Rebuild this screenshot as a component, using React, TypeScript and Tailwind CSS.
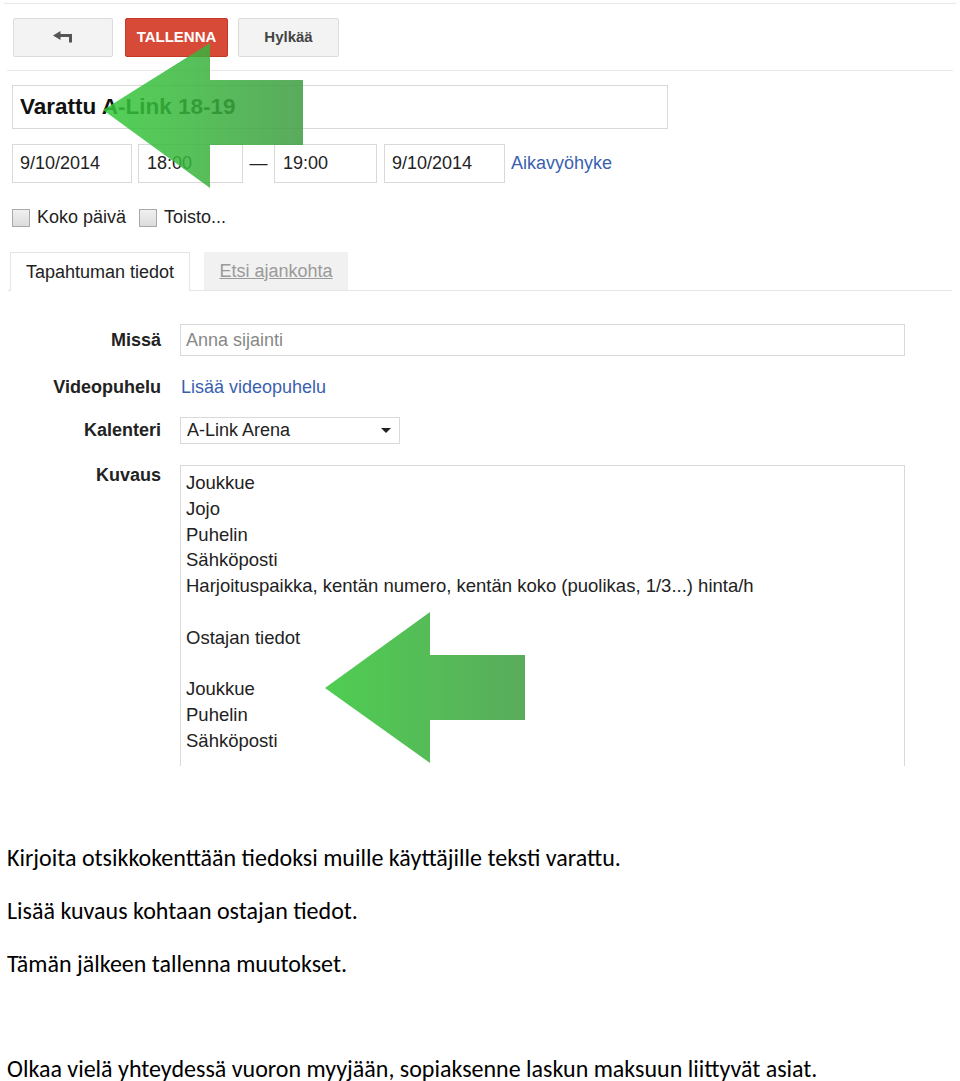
const ui = { fontFamily: '"Liberation Sans", Arial, sans-serif' };

function BackIcon() {
  return (
    <svg width="21" height="13" viewBox="0 0 21 13" fill="#555">
      <polygon points="0,4.5 7.5,0 7.5,9" />
      <rect x="6" y="3" width="13" height="3" />
      <rect x="16" y="3" width="3" height="8.5" />
    </svg>
  );
}

function Checkbox({ label }: { label: string }) {
  return (
    <label className="flex items-center gap-[7px]">
      <span className="w-[18px] h-[18px] border border-[#a9a9a9] bg-gradient-to-b from-[#f0f0f0] to-[#dcdcdc]" />
      <span>{label}</span>
    </label>
  );
}

function Arrows() {
  return (
    <svg className="absolute left-0 top-0 pointer-events-none" width="960" height="800">
      <defs>
        <linearGradient id="g1" x1="103" y1="0" x2="303" y2="0" gradientUnits="userSpaceOnUse">
          <stop offset="0" stopColor="#35c93a" />
          <stop offset="1" stopColor="#3d9c40" />
        </linearGradient>
        <linearGradient id="g2" x1="325" y1="0" x2="525" y2="0" gradientUnits="userSpaceOnUse">
          <stop offset="0" stopColor="#4fcd52" />
          <stop offset="1" stopColor="#5aac5c" />
        </linearGradient>
      </defs>
      <polygon points="103,110 210,43 210,80 303,80 303,145 210,145 210,188" fill="url(#g1)" opacity="0.85" />
      <polygon points="325,688 430,612 430,655 525,655 525,720 430,720 430,763" fill="url(#g2)" />
    </svg>
  );
}

export default function App() {
  const desc = [
    'Joukkue',
    'Jojo',
    'Puhelin',
    'Sähköposti',
    'Harjoituspaikka, kentän numero, kentän koko (puolikas, 1/3...) hinta/h',
    '',
    'Ostajan tiedot',
    '',
    'Joukkue',
    'Puhelin',
    'Sähköposti',
  ];

  return (
    <div className="relative w-[960px] bg-white text-[#222]" style={ui}>
      {/* Toolbar */}
      <div className="pt-[3px]">
        <div className="h-px bg-[#e8e8e8] mx-[4px]" />
        <div className="flex items-center ml-[13px] mt-[14px]">
          <button className="w-[100px] h-[39px] flex items-center justify-center border border-[#dcdcdc] bg-[#f3f3f3] rounded-[2px]">
            <BackIcon />
          </button>
          <button className="w-[103px] h-[39px] ml-[12px] border border-[#c53727] bg-[#d84a38] rounded-[2px] text-white font-bold text-[15px]">
            TALLENNA
          </button>
          <button className="w-[101px] h-[39px] ml-[10px] border border-[#dcdcdc] bg-[#f3f3f3] rounded-[2px] text-[#444] font-bold text-[15px]">
            Hylkää
          </button>
        </div>
        <div className="h-px bg-[#e8e8e8] mx-[7px] mt-[13px]" />
      </div>

      {/* Title + dates */}
      <div className="pl-[12px]">
        <div className="mt-[14px] w-[656px] h-[44px] border border-[#d9d9d9] flex items-center px-[7px] text-[22.5px] font-bold text-[#111]">
          Varattu A-Link 18-19
        </div>
        <div className="mt-[15px] flex items-center text-[18px]">
          <div className="w-[120px] h-[39px] border border-[#d9d9d9] flex items-center px-[7px]">9/10/2014</div>
          <div className="w-[105px] h-[39px] ml-[6px] border border-[#d9d9d9] flex items-center px-[8px]">18:00</div>
          <span className="w-[31px] text-center">—</span>
          <div className="w-[103px] h-[39px] border border-[#d9d9d9] flex items-center px-[8px]">19:00</div>
          <div className="w-[121px] h-[39px] ml-[7px] border border-[#d9d9d9] flex items-center px-[7px]">9/10/2014</div>
          <a className="ml-[6px] text-[#3b5fb0]">Aikavyöhyke</a>
        </div>
        <div className="mt-[21px] flex items-center gap-[13px] text-[18px]">
          <Checkbox label="Koko päivä" />
          <Checkbox label="Toisto..." />
        </div>
      </div>

      {/* Tabs */}
      <div className="mt-[21px] mx-[8px] flex items-end border-b border-[#e5e5e5] text-[18px]">
        <div className="ml-[2px] w-[180px] h-[39px] -mb-px border border-b-0 border-[#e5e5e5] bg-white flex items-center justify-center">
          Tapahtuman tiedot
        </div>
        <div className="ml-[14px] w-[144px] h-[38px] bg-[#f1f1f1] flex items-center justify-center text-[#9a9a9a] underline">
          Etsi ajankohta
        </div>
      </div>

      {/* Form */}
      <div className="text-[18px]">
        <div className="mt-[33px] flex items-center">
          <span className="w-[161px] text-right font-bold">Missä</span>
          <div className="ml-[19px] w-[725px] h-[32px] border border-[#d9d9d9] flex items-center px-[5px] text-[#888]">
            Anna sijainti
          </div>
        </div>
        <div className="mt-[18px] h-[26px] flex items-center">
          <span className="w-[161px] text-right font-bold">Videopuhelu</span>
          <a className="ml-[20px] text-[#3b5fb0]">Lisää videopuhelu</a>
        </div>
        <div className="mt-[17px] flex items-center">
          <span className="w-[161px] text-right font-bold">Kalenteri</span>
          <div className="ml-[19px] w-[220px] h-[27px] border border-[#d9d9d9] flex items-center justify-between pl-[6px] pr-[8px]">
            <span>A-Link Arena</span>
            <span className="w-0 h-0 border-l-[5px] border-r-[5px] border-t-[5px] border-l-transparent border-r-transparent border-t-[#222]" />
          </div>
        </div>
        <div className="mt-[21px] flex items-start">
          <span className="w-[161px] text-right font-bold leading-[20px]">Kuvaus</span>
          <div className="ml-[19px] w-[725px] h-[301px] border border-b-0 border-[#d9d9d9] pl-[5px] pt-[4px] text-[18.5px] leading-[25.8px]">
            {desc.map((line, i) => (
              <div key={i} className="h-[25.8px]">{line}</div>
            ))}
          </div>
        </div>
      </div>

      {/* Instructions */}
      <div className="mt-[65px] pl-[7px] text-[24px] leading-[53px] text-black" style={{ fontFamily: 'Carlito, Lato, "Open Sans", sans-serif' }}>
        <p>Kirjoita otsikkokenttään tiedoksi muille käyttäjille teksti varattu.</p>
        <p>Lisää kuvaus kohtaan ostajan tiedot.</p>
        <p>Tämän jälkeen tallenna muutokset.</p>
        <p>&nbsp;</p>
        <p className="mt-[13px] leading-[26px]">Olkaa vielä yhteydessä vuoron myyjään, sopiaksenne laskun maksuun liittyvät asiat.</p>
      </div>

      <Arrows />
    </div>
  );
}
